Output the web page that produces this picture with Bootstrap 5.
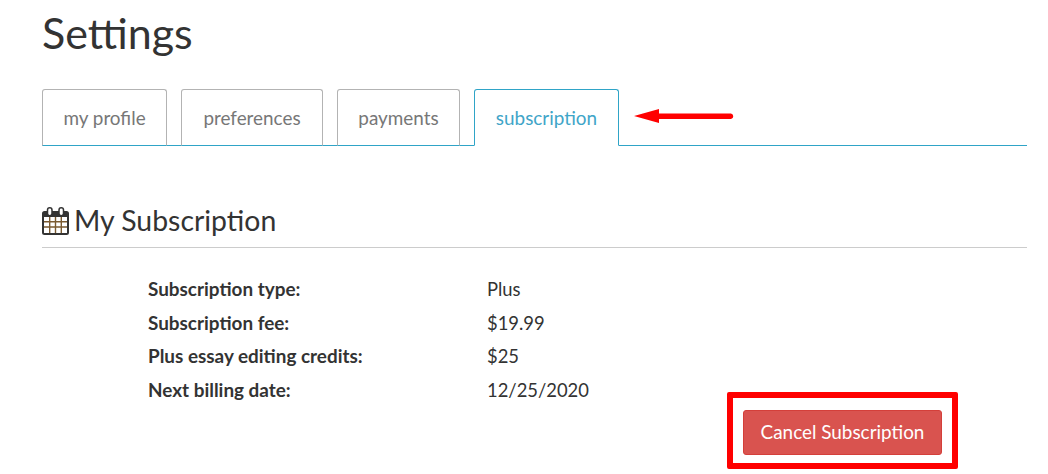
<!DOCTYPE html>
<html lang="en">
<head>
<meta charset="utf-8">
<title>Settings</title>
<link rel="stylesheet" href="https://cdn.jsdelivr.net/npm/bootstrap@5.3.0/dist/css/bootstrap.min.css">
<style>
html, body { height: 474px; overflow: hidden; }
body { font-family: Lato, "Liberation Sans", sans-serif; color: #333; background: #fff; position: relative; }
.page-wrap { padding: 0 21px 0 42px; }
.page-title { font-size: 43px; line-height: 46px; font-weight: 400; margin: 10px 0 33px; color: #333; }
.tab-strip { gap: 14px; border-bottom: 1px solid #2fa4c7; height: 57px; flex-wrap: nowrap; }
.tab-strip .nav-link { height: 57px; margin: 0 0 -1px; padding: 16px 0 0; text-align: center; font-size: 18.9px; line-height: 24px; color: #777; border: 1px solid #b3b3b3; border-bottom-color: #2fa4c7; border-radius: 3px 3px 0 0; background: #fff; }
.tab-strip .nav-link.active { color: #3fa5c8; border-color: #2fa4c7; border-bottom-color: #fff; }
.tab-a { width: 125px; } .tab-b { width: 142px; } .tab-c { width: 123px; } .tab-d { width: 145px; }
.section-head { margin-top: 58px; font-size: 28.4px; line-height: 33px; font-weight: 400; padding-bottom: 10px; border-bottom: 1px solid #ccc; color: #333; gap: 5px; margin-bottom: 25px; }
.info-grid { display: grid; grid-template-columns: 339px auto; grid-auto-rows: 33.6px; padding-left: 106px; font-size: 18.4px; line-height: 33px; margin: 0; }
.info-grid dt { font-weight: 700; font-size: 18.9px; line-height: 31px; color: #333; margin: 0; }
.info-grid dd { margin: 0; color: #333; }
.cancel-btn { position: absolute; left: 743px; top: 410px; width: 199px; height: 45px; font-size: 18.9px; line-height: 24px; padding: 0 0 2px; color: #fff; background: #d9534f; border: 1px solid #d43f3a; border-radius: 3px; }
.mark-box { position: absolute; left: 727px; top: 392px; width: 231px; height: 77px; border: 6px solid #f00; border-radius: 2px; pointer-events: none; }
.mark-arrow { position: absolute; left: 632px; top: 105px; }
</style>
</head>
<body>
<div class="page-wrap">
  <h1 class="page-title">Settings</h1>
  <ul class="nav tab-strip">
    <li class="nav-item"><a class="nav-link tab-a" href="#">my profile</a></li>
    <li class="nav-item"><a class="nav-link tab-b" href="#">preferences</a></li>
    <li class="nav-item"><a class="nav-link tab-c" href="#">payments</a></li>
    <li class="nav-item"><a class="nav-link tab-d active" href="#">subscription</a></li>
  </ul>
  <h2 class="section-head d-flex align-items-center">
    <svg width="27" height="28" viewBox="0 0 27 28" aria-hidden="true">
      <path fill="#333" d="M2.500 4h22A2.500 2.500 0 0 1 27 6.500v19a2.500 2.500 0 0 1-2.500 2.500h-22A2.500 2.500 0 0 1 0 25.500v-19A2.500 2.500 0 0 1 2.500 4z"/>
      <rect x="2" y="10" width="23" height="16" fill="#fff"/>
      <path stroke="#7a5a30" stroke-width="1.400" fill="none" d="M7.700 10v16M13.500 10v16M19.300 10v16M2 14.800h23M2 20h23"/>
      <rect x="5.500" y="0.800" width="4.500" height="8" rx="2.200" fill="#fff" stroke="#333" stroke-width="1.500"/>
      <rect x="17" y="0.800" width="4.500" height="8" rx="2.200" fill="#fff" stroke="#333" stroke-width="1.500"/>
    </svg>
    <span>My Subscription</span>
  </h2>
  <dl class="info-grid">
    <dt>Subscription type:</dt><dd>Plus</dd>
    <dt>Subscription fee:</dt><dd>$19.99</dd>
    <dt>Plus essay editing credits:</dt><dd>$25</dd>
    <dt>Next billing date:</dt><dd>12/25/2020</dd>
  </dl>
</div>
<button type="button" class="btn cancel-btn">Cancel Subscription</button>
<div class="mark-box"></div>
<svg class="mark-arrow" width="104" height="22" viewBox="0 0 104 22" aria-hidden="true">
  <path fill="#f00" d="M2 11 27 4v4.500h72a2.800 2.800 0 0 1 0 5.500H27v4z"/>
</svg>
</body>
</html>
